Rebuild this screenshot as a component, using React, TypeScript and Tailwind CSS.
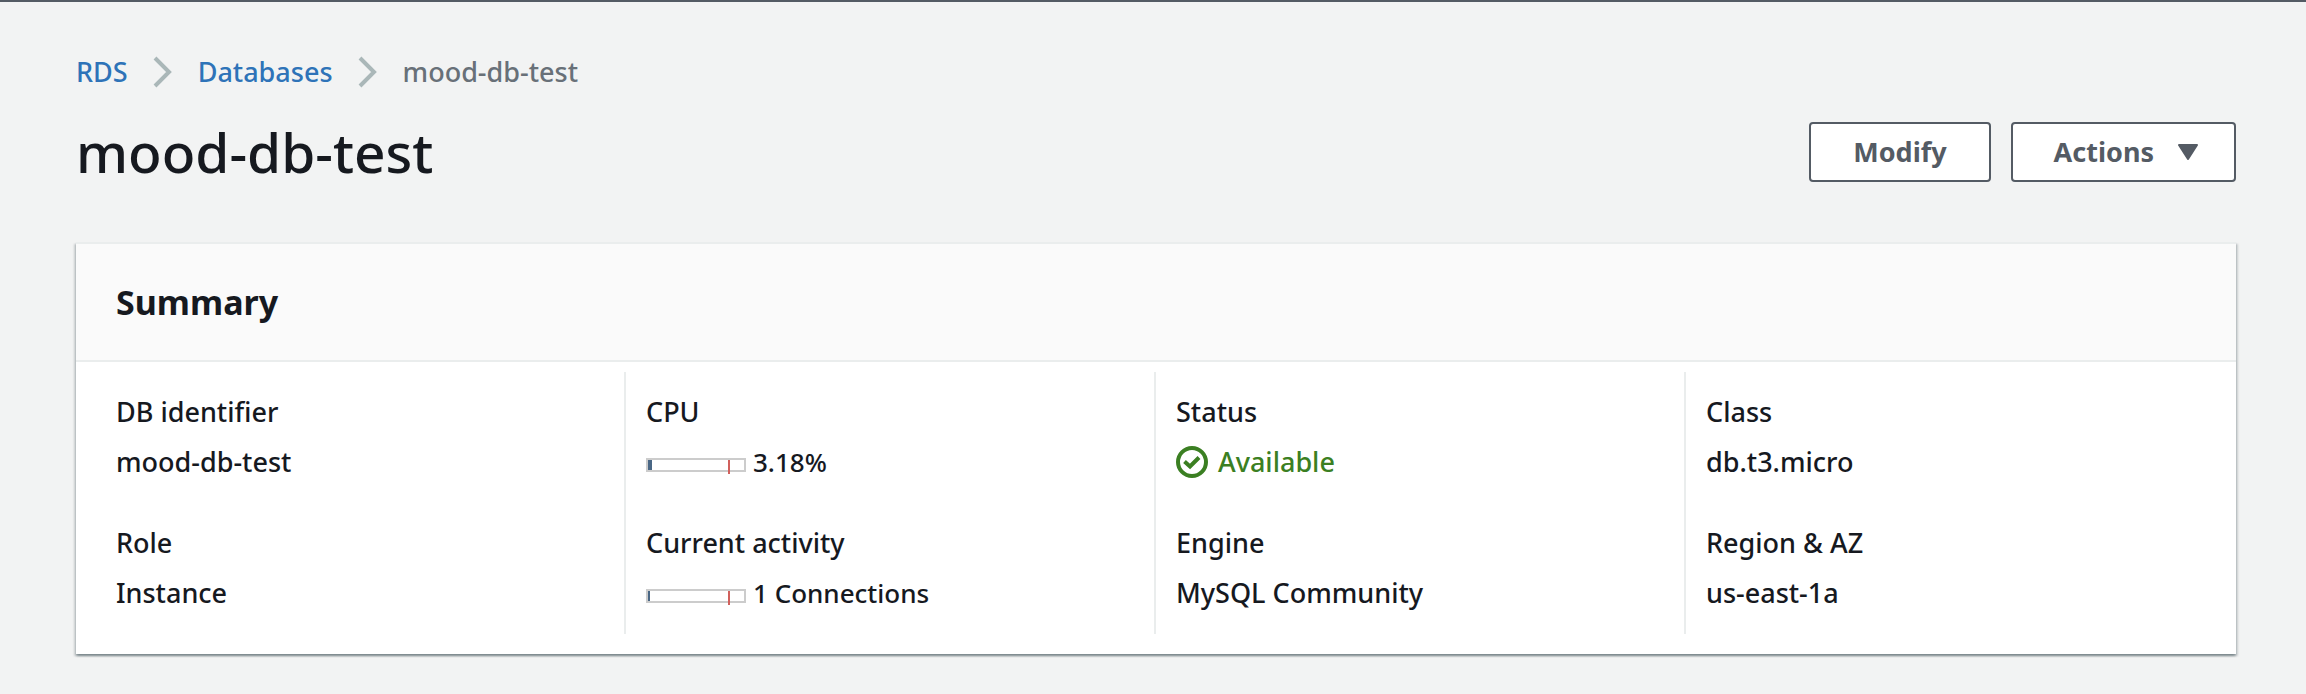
import type { ReactNode } from "react";

function Chevron() {
  return (
    <svg aria-hidden="true" className="h-8 w-5 shrink-0" viewBox="0 0 20 32" fill="none">
      <path d="M2 2 16 16 2 30" stroke="#aab7b8" strokeWidth="4" />
    </svg>
  );
}

function CheckCircle() {
  return (
    <svg aria-hidden="true" className="size-8 shrink-0" viewBox="0 0 32 32" fill="none" stroke="currentColor" strokeWidth="4">
      <circle cx="16" cy="16" r="14" />
      <path d="M8.5 15.5 14 20.5 23 11.5" />
    </svg>
  );
}

function Gauge({ fill, label }: { fill: number; label: string }) {
  return (
    <div className="flex items-center gap-[7px] text-[26px]">
      <div className="relative mt-[6px] h-[14px] w-[100px] border-2 border-[#cccccc]">
        <div className="h-full bg-[#4a6785]" style={{ width: fill }} />
        <div className="absolute top-0 left-[80px] h-[14px] w-[2px] bg-[#d1605c]" />
      </div>
      <span>{label}</span>
    </div>
  );
}

function Field({ label, children }: { label: string; children: ReactNode }) {
  return (
    <div className="flex flex-col gap-[6px]">
      <dt>{label}</dt>
      <dd className="h-11">{children}</dd>
    </div>
  );
}

function Column({ children }: { children: ReactNode }) {
  return (
    <dl className="flex flex-col gap-[37px] border-r-2 border-[#eaeded] pt-[18px] pb-[19px] pl-5 last:border-transparent">
      {children}
    </dl>
  );
}

export default function App() {
  return (
    <div className="min-h-screen border-t-2 border-[#545b64] bg-[#f2f3f3] pr-[70px] pl-[76px] font-['Noto_Sans',sans-serif] text-[27px] leading-[44px] font-medium text-[#16191f]">
      <nav aria-label="Breadcrumb" className="pt-12">
        <ol className="flex items-center gap-[25px]">
          <li>
            <a href="#rds" className="text-[#2e73b8]">RDS</a>
          </li>
          <li><Chevron /></li>
          <li>
            <a href="#databases" className="text-[#2e73b8]">Databases</a>
          </li>
          <li><Chevron /></li>
          <li className="text-[#687078]">mood-db-test</li>
        </ol>
      </nav>

      <header className="mt-7 flex items-center justify-between">
        <h1 className="text-[55px] leading-[60px]">mood-db-test</h1>
        <div className="flex gap-5 font-bold text-[#545b64]">
          <button type="button" className="h-[60px] rounded-[4px] border-2 border-[#545b64] bg-white px-[42px]">
            Modify
          </button>
          <button type="button" className="flex h-[60px] items-center gap-6 rounded-[4px] border-2 border-[#545b64] bg-white pr-9 pl-[41px]">
            Actions
            <svg aria-hidden="true" className="h-4 w-5" viewBox="0 0 20 16" fill="currentColor" stroke="currentColor" strokeWidth="2" strokeLinejoin="round">
              <path d="M1 1H19L10 15Z" />
            </svg>
          </button>
        </div>
      </header>

      <section
        aria-labelledby="summary"
        className="mt-[60px] border-t-2 border-[#eaeded] bg-white shadow-[0_2px_2px_0_rgba(0,28,36,0.3),2px_2px_2px_0_rgba(0,28,36,0.15),-2px_2px_2px_0_rgba(0,28,36,0.15)]"
      >
        <div className="border-b-2 border-[#eaeded] bg-[#fafafa] px-10 py-9">
          <h2 id="summary" className="text-[34px] leading-[44px] font-bold">Summary</h2>
        </div>
        <div className="grid grid-cols-4 px-5 pt-[10px] pb-5">
          <Column>
            <Field label="DB identifier">mood-db-test</Field>
            <Field label="Role">Instance</Field>
          </Column>
          <Column>
            <Field label="CPU"><Gauge fill={4} label="3.18%" /></Field>
            <Field label="Current activity"><Gauge fill={2} label="1 Connections" /></Field>
          </Column>
          <Column>
            <Field label="Status">
              <span className="flex items-center gap-[10px] text-[#3b7f22]">
                <CheckCircle />
                Available
              </span>
            </Field>
            <Field label="Engine">MySQL Community</Field>
          </Column>
          <Column>
            <Field label="Class">db.t3.micro</Field>
            <Field label="Region &amp; AZ">us-east-1a</Field>
          </Column>
        </div>
      </section>
    </div>
  );
}
